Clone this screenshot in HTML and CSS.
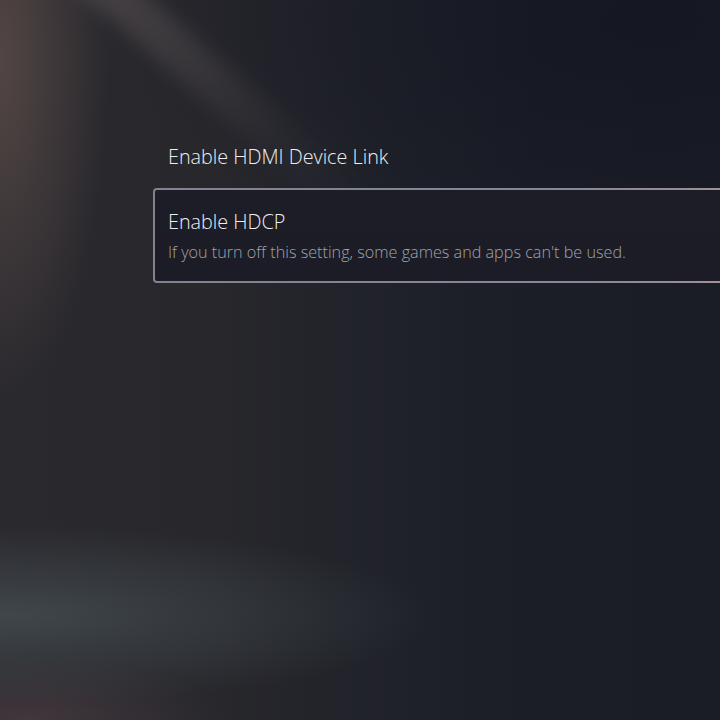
FILE: index.html
```html
<!DOCTYPE html>
<html lang="en">
    <head>
        <meta charset="UTF-8">
        <title>HDMI</title>
        <link rel="stylesheet" href="styles.css">
    </head>
    <body>
    <div class="screen">
        <ul class="settings">
            <li class="item">
                <div class="label">Enable HDMI Device Link</div>
            </li>
            <li class="item focused">
                <div class="label">Enable HDCP</div>
                <div class="hint">If you turn off this setting, some games and apps can't be used.</div>
            </li>
        </ul>
    </div>
    </body>
</html>
```

FILE: styles.css
```css
*{
    margin:0;
    padding:0;
    box-sizing:border-box;
}
li{
    list-style:none;
}
html,body{
    width:720px;
    height:720px;
    overflow:hidden;
}
body{
    font-family:"Open Sans","Noto Sans",sans-serif;
    font-weight:300;
    color:#e6e7ea;
    background:#1b1c25;
}
.screen{
    position:relative;
    width:720px;
    height:720px;
    overflow:hidden;
    background:
        radial-gradient(ellipse 110px 340px at 0 60px, rgba(96,80,76,0.75), rgba(96,80,76,0) 100%),
        radial-gradient(ellipse 420px 90px at 10px 615px, rgba(78,90,94,0.6), rgba(78,90,94,0) 100%),
        radial-gradient(ellipse 200px 60px at 30px 718px, rgba(84,66,72,0.55), rgba(84,66,72,0) 100%),
        radial-gradient(ellipse 520px 260px at 640px 20px, rgba(20,22,34,0.85), rgba(20,22,34,0) 100%),
        linear-gradient(90deg,#2a292e 0%,#27272c 30%,#20222a 55%,#1b1d27 75%,#1a1c26 100%);
}
/* light ray from the top left */
.screen::before{
    content:"";
    position:absolute;
    left:22px;
    top:77px;
    width:420px;
    height:42px;
    background:linear-gradient(90deg, rgba(125,112,110,0.36) 0%, rgba(110,100,100,0.3) 30%, rgba(90,85,88,0.1) 65%, rgba(90,85,88,0) 90%);
    border-radius:21px;
    transform:rotate(41.5deg);
    filter:blur(9px);
}
.settings{
    position:relative;
    padding:123px 0 0 153px;
}
.item{
    width:600px;
    padding:19px 13px;
    border:2px solid transparent;
    border-radius:4px;
}
.item .label{
    font-size:19.8px;
    line-height:26px;
    color:#eceef1;
}
.item .hint{
    margin-top:6px;
    font-size:16.2px;
    line-height:22px;
    color:#a1a3ab;
}
.item.focused{
    margin-top:-3px;
    padding-bottom:18px;
    background:
        linear-gradient(#1c1d26,#1b1c25) padding-box,
        linear-gradient(90deg,#80838d 0%,#868893 70%,#9a8e94 90%,#b09890 100%) border-box;
}
```
